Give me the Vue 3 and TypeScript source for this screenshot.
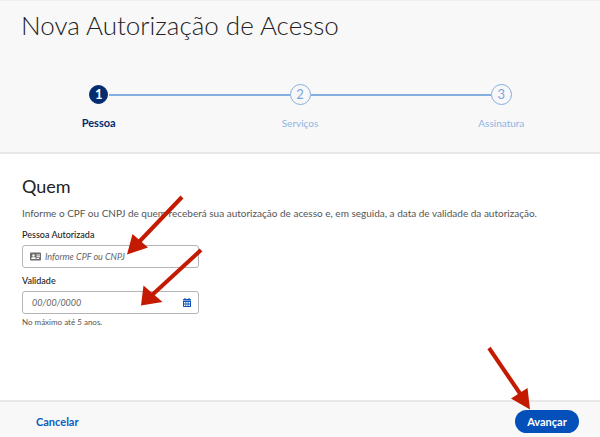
<script setup lang="ts">
import { ref } from 'vue'

interface Step {
  number: number
  label: string
}

const steps: Step[] = [
  { number: 1, label: 'Pessoa' },
  { number: 2, label: 'Serviços' },
  { number: 3, label: 'Assinatura' },
]

const current = ref(1)
const person = ref('')
const expiry = ref('')
</script>

<template>
  <div class="page">
    <header class="top">
      <h1>Nova Autorização de Acesso</h1>
      <ol class="steps">
        <li v-for="step in steps" :key="step.number" class="step" :class="{ active: step.number === current }">
          <span class="marker"><span class="circle">{{ step.number }}</span></span>
          <span class="step-label">{{ step.label }}</span>
        </li>
      </ol>
    </header>

    <main class="content">
      <h2>Quem</h2>
      <p class="intro">
        Informe o CPF ou CNPJ de quem receberá sua autorização de acesso e, em seguida, a data de validade da autorização.
      </p>

      <label class="field-label" for="person">Pessoa Autorizada</label>
      <div class="field">
        <svg class="card-icon" viewBox="0 0 22 18" aria-hidden="true">
          <path fill="#6b6b6b" fill-rule="evenodd" d="M2 1h18a2 2 0 0 1 2 2v12a2 2 0 0 1-2 2H2a2 2 0 0 1-2-2V3a2 2 0 0 1 2-2zM13 5v2h7V5zM13 8.500v2h7v-2zM13 12v2h5v-2zM7 4.500a2.500 2.500 0 1 0 0 5 2.500 2.500 0 0 0 0-5zM2.500 14h9v-1a2.500 2.500 0 0 0-2.500-2.500H5A2.500 2.500 0 0 0 2.500 13z" />
        </svg>
        <input id="person" v-model="person" type="text" placeholder="Informe CPF ou CNPJ" />
      </div>

      <label class="field-label" for="expiry">Validade</label>
      <div class="field">
        <input id="expiry" v-model="expiry" class="date" type="text" inputmode="numeric" placeholder="00/00/0000" />
        <button class="calendar" type="button" aria-label="Abrir calendário">
          <svg viewBox="0 0 16 18" aria-hidden="true">
            <path fill="#0b4fb8" d="M3 0h2v2h6V0h2v2h1.500A1.500 1.500 0 0 1 16 3.500V5H0V3.500A1.500 1.500 0 0 1 1.500 2H3z" />
            <path fill="#0b4fb8" fill-rule="evenodd" d="M0 6h16v10.500a1.500 1.500 0 0 1-1.500 1.500h-13A1.500 1.500 0 0 1 0 16.500zM2 8v2h3V8zM6.500 8v2h3V8zM11 8v2h3V8zM2 11v2h3v-2zM6.500 11v2h3v-2zM11 11v2h3v-2zM2 14v2h3v-2zM6.500 14v2h3v-2zM11 14v2h3v-2z" />
          </svg>
        </button>
      </div>
      <p class="hint">No máximo até 5 anos.</p>
    </main>

    <footer class="actions">
      <button class="cancel" type="button">Cancelar</button>
      <button class="next" type="button">Avançar</button>
    </footer>

    <svg class="arrows" width="600" height="437" viewBox="0 0 600 437" aria-hidden="true">
      <g stroke="#c41a02" stroke-width="4">
        <path d="M182 197L138 243" />
        <path d="M201 250L151 296" />
        <path d="M489 348L521 395" />
      </g>
      <g fill="#c41a02">
        <path d="M127 254.500L132.500 234L148 247.500z" />
        <path d="M141 305.500L143.500 285.500L162.500 302z" />
        <path d="M530 409.500L511 398.500L527.500 388z" />
      </g>
    </svg>
  </div>
</template>

<style>
body {
  background: #ffffff;
}
</style>

<style scoped>
.page {
  position: relative;
  display: flex;
  flex-direction: column;
  min-height: 100vh;
  overflow: hidden;
  font-family: Lato, "Open Sans", sans-serif;
  color: #222222;
}

.top {
  padding: 8px 0 20px;
  border-top: 1px solid #f0f0f0;
  border-bottom: 2px solid #e8e8e8;
  background: #f8f8f8;
}

h1 {
  margin: 0 21px;
  font-size: 26px;
  font-weight: 300;
  line-height: 32px;
}

.steps {
  display: grid;
  grid-template-columns: repeat(3, 1fr);
  margin: 43px -2px 0;
  padding: 0;
  list-style: none;
}

.step {
  display: flex;
  flex-direction: column;
  align-items: center;
  gap: 9px;
  color: #8fb5e3;
  font-size: 10px;
  line-height: 18px;
}

.marker {
  display: flex;
  align-items: center;
  justify-content: center;
  width: 100%;
  height: 21px;
}

.marker::before,
.marker::after {
  content: "";
  flex: 1;
  height: 2px;
  background: #84ade0;
}

.step:first-child .marker::before,
.step:last-child .marker::after {
  background: transparent;
}

.circle {
  box-sizing: border-box;
  width: 21px;
  height: 21px;
  border: 1px solid #84ade0;
  border-radius: 50%;
  color: #7ba6dc;
  font-size: 13px;
  line-height: 19px;
  text-align: center;
}

.active .circle {
  width: 19px;
  height: 19px;
  margin: 0 1px;
  border-color: #032c70;
  background: #032c70;
  color: #ffffff;
  font-weight: 700;
  line-height: 17px;
}

.active .step-label {
  color: #032c70;
  font-size: 11px;
  font-weight: 700;
}

.content {
  flex: 1;
  padding: 20px 22px;
}

h2 {
  margin: 0;
  font-size: 18px;
  font-weight: 400;
  line-height: 24px;
}

.intro {
  margin: 6px 0 5px;
  color: #555555;
  font-size: 10px;
  line-height: 18px;
}

.field-label {
  display: block;
  font-size: 9px;
  font-weight: 500;
  line-height: 16px;
}

.field {
  display: flex;
  align-items: center;
  gap: 4px;
  box-sizing: border-box;
  width: 177px;
  height: 23px;
  margin: 2px 0 5px;
  padding: 0 7px;
  border: 1px solid #b5b5b5;
  border-radius: 3px;
}

.card-icon {
  flex: none;
  width: 11px;
  height: 9px;
}

input {
  flex: 1;
  min-width: 0;
  padding: 0;
  border: 0;
  outline: 0;
  background: transparent;
  color: #444444;
  font-family: inherit;
  font-size: 9px;
  line-height: 18px;
}

input::placeholder {
  color: #666666;
  font-style: italic;
  opacity: 1;
}

.date {
  padding-left: 2px;
}

button {
  border: 0;
  font-family: inherit;
  font-weight: 700;
  cursor: pointer;
}

.calendar {
  display: flex;
  padding: 0;
  background: transparent;
}

.calendar svg {
  width: 8px;
  height: 9px;
}

.hint {
  margin: -3px 0 0;
  color: #555555;
  font-size: 8px;
  line-height: 12px;
}

.actions {
  display: flex;
  align-items: center;
  justify-content: space-between;
  padding: 8px 21px 4px 30px;
  border-top: 2px solid #e8e8e8;
  background: #f8f8f8;
}

.cancel {
  padding: 0 6px;
  background: transparent;
  color: #0b5cc0;
  font-size: 11px;
  line-height: 23px;
}

.next {
  min-width: 64px;
  padding: 0 12px;
  border-radius: 12px;
  background: #0350ba;
  color: #ffffff;
  font-size: 11px;
  line-height: 23px;
}

.arrows {
  position: absolute;
  top: 0;
  left: 0;
  pointer-events: none;
}
</style>
